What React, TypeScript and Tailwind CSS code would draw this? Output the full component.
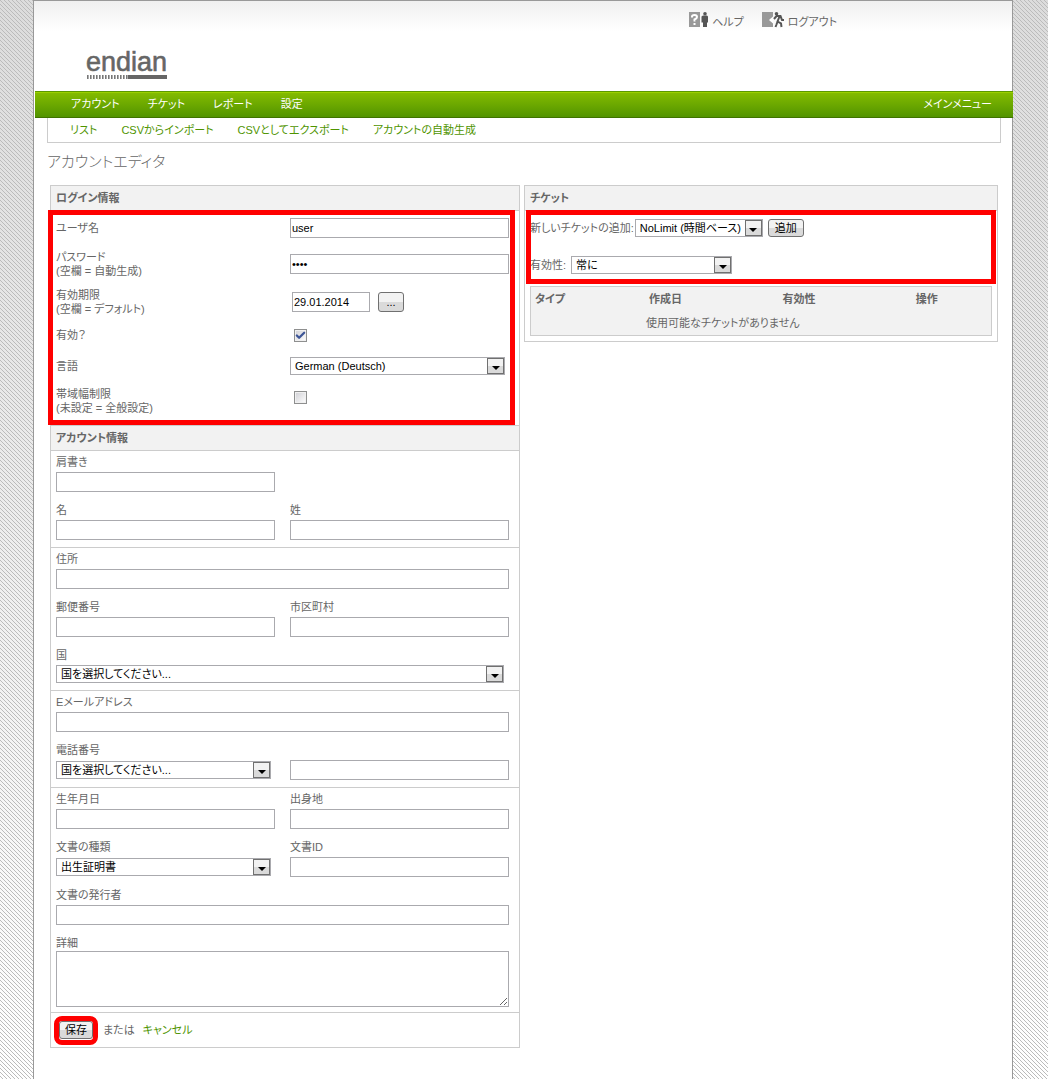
import { useState, type ComponentProps, type ReactNode } from "react";
import { Check } from "lucide-react";
import clsx from "clsx";

// Account editor of the hotspot admin interface.

const NAV = ["アカウント", "チケット", "レポート", "設定"];
const SUBNAV = ["リスト", "CSVからインポート", "CSVとしてエクスポート", "アカウントの自動生成"];

function Logo() {
  return (
    <svg width="84" height="46" viewBox="0 0 84 46" role="img" aria-label="endian">
      <text
        x="0"
        y="36"
        fill="#666"
        stroke="#666"
        strokeWidth="0.6"
        fontSize="27"
        fontFamily="'Liberation Sans', sans-serif"
      >
        endian
      </text>
      {Array.from({ length: 14 }, (_, i) => (
        <rect key={i} x={1 + i * 3} y="40" width="1.6" height="4" fill="#777" />
      ))}
      <rect x="42" y="40" width="39" height="4" fill="#666" />
    </svg>
  );
}

function HelpIcon() {
  return (
    <svg width="20" height="16" viewBox="0 0 20 16" aria-hidden="true">
      <rect width="11" height="15" fill="#999" />
      <path d="M3 5.500V4.500Q3 3 5.500 3T8 5Q8 6.500 5.500 7.500V9.500" fill="none" stroke="#fff" strokeWidth="2" />
      <rect x="4.500" y="11" width="2" height="2" fill="#fff" />
      <circle cx="16" cy="1.800" r="1.800" fill="#555" />
      <path d="M14 3.500h4l1 1v6h-1v4.500h-4v-4.500h-1.500v-6z" fill="#555" />
    </svg>
  );
}

function LogoutIcon() {
  return (
    <svg width="24" height="16" viewBox="0 0 24 16" aria-hidden="true">
      <rect width="11" height="15" fill="#999" />
      <path d="M11 4.500v7L7 8z" fill="#fff" />
      <circle cx="14.500" cy="1.800" r="1.800" fill="#555" />
      <path
        d="M12 7l2.500-3h4l1.500 4h2M17.500 4.500l-2 5 3.500 2 .5 3.500M15.500 9.500l-1 3-1 2.500"
        fill="none"
        stroke="#555"
        strokeWidth="2"
      />
    </svg>
  );
}

function TextInput({ className, ...props }: ComponentProps<"input">) {
  return (
    <input
      {...props}
      className={clsx("h-5 border border-[#aaaaae] bg-white px-px text-black outline-none", className ?? "w-full")}
    />
  );
}

function Select({ className, children, ...props }: ComponentProps<"select">) {
  return (
    <div className={clsx("relative h-[18px]", className)}>
      <select
        {...props}
        className="block h-full w-full appearance-none border border-[#aaaaae] bg-white pl-1 pr-[18px] text-black outline-none"
      >
        {children}
      </select>
      <span className="pointer-events-none absolute inset-y-px right-px flex w-[17px] items-center justify-center border border-[#707070] bg-linear-to-b from-[#f2f2f2] from-50% to-[#dadada] to-50%">
        <svg width="8" height="4" viewBox="0 0 8 4" className="mt-1" aria-hidden="true">
          <path d="M0 0h8L4 4z" fill="#000" />
        </svg>
      </span>
    </div>
  );
}

function Checkbox({ id, defaultChecked }: { id: string; defaultChecked?: boolean }) {
  return (
    <span className="relative ml-1 block size-[13px]">
      <input
        id={id}
        type="checkbox"
        defaultChecked={defaultChecked}
        className="peer block size-[13px] appearance-none border border-[#8e8f8f] bg-linear-to-br from-[#cfcfd4] to-white outline -outline-offset-2 outline-[#f0f0f0]"
      />
      <Check
        className="pointer-events-none absolute inset-0 hidden size-[13px] p-px text-[#3d5596] peer-checked:block"
        strokeWidth={5}
        aria-hidden="true"
      />
    </span>
  );
}

function Button({ className, ...props }: ComponentProps<"button">) {
  return (
    <button
      {...props}
      className={clsx(
        "rounded-[3px] border border-[#707070] bg-linear-to-b from-[#f2f2f2] from-50% to-[#dadada] to-50% text-black",
        className,
      )}
    />
  );
}

function PanelTitle({ children }: { children: ReactNode }) {
  return (
    <h2 className="flex h-[25px] items-center border-b border-[#ccc] bg-[#f2f2f2] px-[5px] font-bold">{children}</h2>
  );
}

function LoginRow({
  id,
  label,
  hint,
  className,
  children,
}: {
  id: string;
  label: string;
  hint?: string;
  className: string;
  children: ReactNode;
}) {
  return (
    <div className={clsx("grid grid-cols-2 items-center gap-[15px]", className)}>
      <label htmlFor={id}>
        {label}
        {hint && <span className="block">{hint}</span>}
      </label>
      {children}
    </div>
  );
}

function Section({ className, children }: { className?: string; children: ReactNode }) {
  return (
    <div
      className={clsx(
        "grid grid-cols-2 gap-x-[15px] gap-y-[11px] border-b border-[#ccc] pl-[5px] pr-[10px] pt-1",
        className ?? "pb-[7px]",
      )}
    >
      {children}
    </div>
  );
}

function Field({
  id,
  label,
  className,
  children,
}: {
  id: string;
  label: string;
  className?: string;
  children?: ReactNode;
}) {
  return (
    <div className={clsx("flex flex-col gap-[3px]", className)}>
      <label htmlFor={id}>{label}</label>
      {children ?? <TextInput id={id} />}
    </div>
  );
}

function Highlight({ className }: { className: string }) {
  return <div className={clsx("pointer-events-none absolute border-5 border-[#f00]", className)} />;
}

export default function App() {
  const [username, setUsername] = useState("user");
  const [password, setPassword] = useState("pass");
  const [expires, setExpires] = useState("29.01.2014");

  return (
    <div className="min-h-screen bg-[linear-gradient(45deg,transparent_44%,#bbb_44%,#bbb_56%,transparent_56%),linear-gradient(#dcdcdc,#fff)] bg-[size:4px_4px,auto] pl-[33px] pr-[35px] font-['Liberation_Sans','Noto_Sans_CJK_JP',sans-serif] text-[11px] leading-[14px] text-[#666] [font-feature-settings:'palt']">
      <div className="min-h-screen border-x border-[#999] bg-white pb-4">
        <header className="flex h-[91px] items-start justify-between border-t border-[#999] bg-linear-to-b from-[#f0f0f0] to-white to-[30px] pl-[52px] pr-[175px]">
          <div className="pt-[34px]">
            <Logo />
          </div>
          <div className="flex gap-[18px] pt-[11px] leading-[12px]">
            <a href="#help" className="flex items-end gap-[3px]">
              <HelpIcon />
              ヘルプ
            </a>
            <a href="#logout" className="flex items-end gap-[2px]">
              <LogoutIcon />
              ログアウト
            </a>
          </div>
        </header>

        <nav className="-mr-px ml-px flex h-[27px] items-center justify-between border-y border-t-[#5c9900] border-b-[#3f7300] bg-linear-to-b from-[#85bd00] to-[#529400] pb-px pl-9 pr-[21px] text-white shadow-[inset_0_1px_#9bcf00]">
          <div className="flex gap-7">
            {NAV.map((item) => (
              <a key={item} href="#nav">
                {item}
              </a>
            ))}
          </div>
          <a href="#main">メインメニュー</a>
        </nav>

        <div className="px-[11px] pl-[13px]">
          <nav className="flex h-[25px] items-center gap-6 border border-t-0 border-[#ccc] pl-[22px] text-[#4f9400]">
            {SUBNAV.map((item) => (
              <a key={item} href="#sub">
                {item}
              </a>
            ))}
          </nav>
          <h1 className="flex h-[42px] items-center pb-1 text-[15px] font-light">アカウントエディタ</h1>

          <main className="grid grid-cols-[470fr_474fr] items-start gap-1 px-[3px]">
            <form className="border border-[#ccc]" onSubmit={(e) => e.preventDefault()}>
              <PanelTitle>ログイン情報</PanelTitle>
              <div className="relative border-b border-[#ccc] pb-[6px] pl-[5px] pr-[10px]">
                <LoginRow id="username" label="ユーザ名" className="h-[34px]">
                  <TextInput id="username" value={username} onChange={(e) => setUsername(e.target.value)} />
                </LoginRow>
                <LoginRow id="password" label="パスワード" hint="(空欄 = 自動生成)" className="h-[38px]">
                  <TextInput
                    id="password"
                    type="password"
                    className="w-full text-[#000080]"
                    value={password}
                    onChange={(e) => setPassword(e.target.value)}
                  />
                </LoginRow>
                <LoginRow id="expires" label="有効期限" hint="(空欄 = デフォルト)" className="h-[38px]">
                  <div className="flex gap-2 pl-[2px]">
                    <TextInput
                      id="expires"
                      className="w-[78px]"
                      value={expires}
                      onChange={(e) => setExpires(e.target.value)}
                    />
                    <Button type="button" className="h-5 w-[26px]" aria-label="日付を選択">
                      ...
                    </Button>
                  </div>
                </LoginRow>
                <LoginRow id="enabled" label="有効？" className="h-7">
                  <Checkbox id="enabled" defaultChecked />
                </LoginRow>
                <LoginRow id="language" label="言語" className="h-[34px]">
                  <Select id="language" className="mr-1">
                    <option>German (Deutsch)</option>
                  </Select>
                </LoginRow>
                <LoginRow id="bandwidth" label="帯域幅制限" hint="(未設定 = 全般設定)" className="h-[36px]">
                  <div className="pb-2">
                    <Checkbox id="bandwidth" />
                  </div>
                </LoginRow>
                <Highlight className="-left-[3px] -top-px bottom-0 right-1" />
              </div>

              <PanelTitle>アカウント情報</PanelTitle>
              <Section>
                <Field id="title" label="肩書き" />
                <Field id="firstname" label="名" className="col-start-1" />
                <Field id="lastname" label="姓" />
              </Section>
              <Section>
                <Field id="street" label="住所" className="col-span-2" />
                <Field id="zip" label="郵便番号" />
                <Field id="city" label="市区町村" />
                <Field id="country" label="国" className="col-span-2">
                  <Select id="country" className="mr-[5px]">
                    <option>国を選択してください...</option>
                  </Select>
                </Field>
              </Section>
              <Section>
                <Field id="email" label="Eメールアドレス" className="col-span-2" />
                <Field id="phone-country" label="電話番号">
                  <div className="flex h-5 items-center">
                    <Select id="phone-country" className="mr-1 grow">
                      <option>国を選択してください...</option>
                    </Select>
                  </div>
                </Field>
                <div className="self-end">
                  <TextInput id="phone" aria-label="電話番号" className="block w-full" />
                </div>
              </Section>
              <Section className="pb-[5px]">
                <Field id="birthdate" label="生年月日" />
                <Field id="birthplace" label="出身地" />
                <Field id="doc-type" label="文書の種類">
                  <div className="flex h-5 items-center">
                    <Select id="doc-type" className="mr-1 grow">
                      <option>出生証明書</option>
                    </Select>
                  </div>
                </Field>
                <Field id="doc-id" label="文書ID" />
                <Field id="doc-issuer" label="文書の発行者" className="col-span-2" />
                <div className="col-span-2 flex flex-col gap-px">
                  <label htmlFor="details">詳細</label>
                  <textarea
                    id="details"
                    className="h-14 resize-y border border-[#aaaaae] bg-white p-[2px] text-black outline-none"
                  />
                </div>
              </Section>
              <div className="flex h-[34px] items-center gap-2 pl-2">
                <div className="relative mr-[2px]">
                  <Button type="submit" className="block h-[18px] w-[34px]">
                    保存
                  </Button>
                  <Highlight className="-inset-x-[5px] -bottom-[6px] -top-[5px] rounded-lg" />
                </div>
                <span>または</span>
                <a href="#cancel" className="text-[#4f9400]">
                  キャンセル
                </a>
              </div>
            </form>

            <section className="border border-[#ccc]">
              <PanelTitle>チケット</PanelTitle>
              <div className="relative px-[5px]">
                <div className="flex h-[34px] items-center">
                  <label htmlFor="ticket">新しいチケットの追加:</label>
                  <Select id="ticket" className="ml-px w-[128px]">
                    <option>NoLimit (時間ベース)</option>
                  </Select>
                  <Button type="button" className="ml-[5px] h-[18px] w-[36px]">
                    追加
                  </Button>
                </div>
                <div className="flex h-10 items-center">
                  <label htmlFor="validity">有効性:</label>
                  <Select id="validity" className="ml-[5px] w-[161px]">
                    <option>常に</option>
                  </Select>
                </div>
                <Highlight className="-top-px bottom-px left-px right-px" />
              </div>
              <div className="mx-[5px] mb-[5px] mt-px border border-[#ccc] bg-[#f2f2f2]">
                <table className="w-full table-fixed text-left">
                  <thead>
                    <tr className="h-6">
                      <th className="w-[25%] pl-1">タイプ</th>
                      <th className="w-[29%] pl-[3px]">作成日</th>
                      <th className="w-[29%] pl-[3px]">有効性</th>
                      <th className="pl-[3px]">操作</th>
                    </tr>
                  </thead>
                  <tbody>
                    <tr className="h-6">
                      <td />
                      <td colSpan={3}>使用可能なチケットがありません</td>
                    </tr>
                  </tbody>
                </table>
              </div>
            </section>
          </main>
        </div>
      </div>
    </div>
  );
}
